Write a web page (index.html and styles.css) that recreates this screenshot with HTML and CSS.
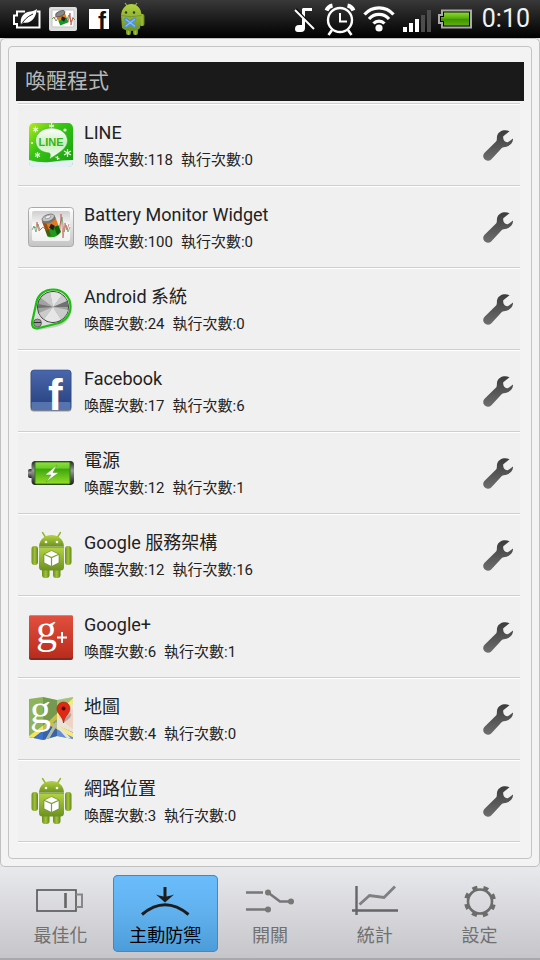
FILE: index.html
```html
<!DOCTYPE html>
<html lang="zh-Hant">
<head>
    <meta charset="UTF-8">
    <meta name="viewport" content="width=device-width, initial-scale=1.0">
    <title>喚醒程式</title>
    <link rel="stylesheet" href="styles.css">
</head>
<body>
    <!-- Shared shapes -->
    <svg class="sprite" width="0" height="0" aria-hidden="true">
        <defs>
            <linearGradient id="wrenchFill" x1="0" y1="0" x2="0" y2="1">
                <stop offset="0" stop-color="#3c3c3c"/>
                <stop offset="1" stop-color="#6e6e6e"/>
            </linearGradient>
            <linearGradient id="droidFill" x1="0" y1="0" x2="0" y2="1">
                <stop offset="0" stop-color="#b3d340"/>
                <stop offset="1" stop-color="#6c9120"/>
            </linearGradient>
            <linearGradient id="limbFill" x1="0" y1="0" x2="1" y2="0">
                <stop offset="0" stop-color="#6c8f20"/>
                <stop offset="0.5" stop-color="#a0c23a"/>
                <stop offset="1" stop-color="#648619"/>
            </linearGradient>
            <linearGradient id="frameFill" x1="0" y1="0" x2="0" y2="1">
                <stop offset="0" stop-color="#ffffff"/>
                <stop offset="1" stop-color="#c4c4c4"/>
            </linearGradient>
            <linearGradient id="screenFill" x1="0" y1="0" x2="0" y2="1">
                <stop offset="0" stop-color="#cfcfcf"/>
                <stop offset="0.5" stop-color="#fafafa"/>
                <stop offset="1" stop-color="#f1f1f1"/>
            </linearGradient>
            <linearGradient id="lineFill" x1="0" y1="0" x2="1" y2="1">
                <stop offset="0" stop-color="#b4ea18"/>
                <stop offset="0.4" stop-color="#35c512"/>
                <stop offset="1" stop-color="#139c10"/>
            </linearGradient>
            <linearGradient id="bubbleFill" x1="0" y1="0" x2="0" y2="1">
                <stop offset="0" stop-color="#ffffff"/>
                <stop offset="0.5" stop-color="#c9f0bf"/>
                <stop offset="1" stop-color="#f2fcef"/>
            </linearGradient>
            <linearGradient id="fbFill" x1="0" y1="0" x2="0" y2="1">
                <stop offset="0" stop-color="#4a67ab"/>
                <stop offset="1" stop-color="#25407f"/>
            </linearGradient>
            <linearGradient id="plusFill" x1="0" y1="0" x2="0" y2="1">
                <stop offset="0" stop-color="#e2503e"/>
                <stop offset="1" stop-color="#b92c1d"/>
            </linearGradient>
            <linearGradient id="cellFill" x1="0" y1="0" x2="0" y2="1">
                <stop offset="0" stop-color="#8fe040"/>
                <stop offset="0.28" stop-color="#6ccb28"/>
                <stop offset="0.32" stop-color="#3ba70c"/>
                <stop offset="1" stop-color="#96dd28"/>
            </linearGradient>
            <linearGradient id="capFill" x1="0" y1="0" x2="0" y2="1">
                <stop offset="0" stop-color="#222222"/>
                <stop offset="0.4" stop-color="#999999"/>
                <stop offset="1" stop-color="#1b1b1b"/>
            </linearGradient>
            <linearGradient id="statusCell" x1="0" y1="0" x2="0" y2="1">
                <stop offset="0" stop-color="#8ada2c"/>
                <stop offset="0.45" stop-color="#58ad0c"/>
                <stop offset="0.5" stop-color="#3f9100"/>
                <stop offset="1" stop-color="#5eb010"/>
            </linearGradient>

            <symbol id="wrench" viewBox="0 0 32 32">
                <path fill="url(#wrenchFill)" d="M27.5 2.2C22.5 -0.2 16.5 2 15.2 6.5C14.6 8.8 15.3 10.5 14.3 12.3L2.6 23.7A4.7 4.7 0 0 0 9.2 30.4L19.6 19.2C21 17.8 22.5 18.3 24.5 17.7C28.500 16.5 31.3 13.5 31 9.5L25.8 13.3C22.8 13.2 20.6 10.5 21.3 7.2Z"/>
            </symbol>

            <symbol id="droid" viewBox="0 0 48 48">
                <path d="M15.5 1.5L19 7M33.5 1.5L30 7" stroke="#93b432" stroke-width="1.4" stroke-linecap="round"/>
                <path fill="url(#droidFill)" d="M12 15.5C12.5 8 18 4 24.5 4S36.5 8 37 15.5Z"/>
                <circle cx="19" cy="11" r="1.3" fill="#fff"/>
                <circle cx="30" cy="11" r="1.3" fill="#fff"/>
                <rect x="4.5" y="15" width="6.5" height="19" rx="3" fill="url(#limbFill)"/>
                <rect x="38" y="15" width="6.5" height="19" rx="3" fill="url(#limbFill)"/>
                <rect x="15" y="34" width="7.5" height="13" rx="3" fill="url(#limbFill)"/>
                <rect x="26" y="34" width="7.5" height="13" rx="3" fill="url(#limbFill)"/>
                <path fill="url(#droidFill)" d="M12 16.5H37V36Q37 39.5 33.5 39.5H15.5Q12 39.5 12 36Z"/>
                <path stroke="#5c7a1b" stroke-width=".8" d="M12 16.2H37"/>
                <path fill="#fff" stroke="#60801d" stroke-width=".6" d="M24.5 19.5L32 23.2V31.8L24.5 35.5L17 31.8V23.2Z"/>
                <path fill="none" stroke="#7d9c3c" stroke-width="1.2" d="M17 23.2L24.5 26.5L32 23.2M24.5 26.5V35.5"/>
            </symbol>

            <symbol id="monitor" viewBox="0 0 48 48">
                <rect x="1.5" y="4.5" width="45" height="39" rx="3" fill="url(#frameFill)" stroke="#aaa"/>
                <rect x="5" y="8" width="38" height="30" rx="2" fill="url(#screenFill)"/>
                <path fill="none" stroke="#4d9958" stroke-width=".7" d="M5 27L7 23L9 29L11 21L13 27L16 24L18 26M32 25L35 14L37 29L39 22L41 29L43 24"/>
                <path fill="none" stroke="#c65a50" stroke-width=".7" d="M6 24L9 25L10 19L12 28L15 25M33 28L34 11L36 35L38 20L40 27L42 21"/>
                <g transform="rotate(-20 24 24)">
                    <path fill="#e5791f" d="M17.5 16H31.5V25H17.5Z"/>
                    <path fill="#22991d" d="M17.5 25H31.5V32Q24.5 37 17.5 32Z"/>
                    <path fill="#6b3009" d="M17.5 16H21V32.5L17.5 31Z" opacity=".6"/>
                    <path fill="#10600d" d="M27 25H31.5V32L27 34Z"/>
                    <path fill="#222" d="M25 21L28 24L25 28L22 24Z"/>
                    <ellipse cx="24.5" cy="16" rx="7" ry="3.8" fill="#777"/>
                    <ellipse cx="24.5" cy="14.5" rx="6.5" ry="3.3" fill="#c5c5c5" stroke="#666" stroke-width=".7"/>
                    <ellipse cx="24.5" cy="13.5" rx="3" ry="1.5" fill="#eee" stroke="#777" stroke-width=".5"/>
                </g>
            </symbol>
        </defs>
    </svg>

    <header class="status-bar">
        <div class="status-group">
            <svg width="29" height="24" viewBox="0 0 29 24">
                <path fill="none" stroke="#fff" stroke-width="2" d="M13 4.5H5V8.5H2V17H5V20.5H27.5V4.5H25"/>
                <path fill="#fff" d="M9 18C7.5 10 12 5 18 4.5C20.5 4.3 23 3.5 25 2C24 10 20 17 11.5 15.5L9 18Z"/>
                <path fill="none" stroke="#222" d="M8.5 19C11 14 15 9.5 21 7"/>
            </svg>
            <svg width="28" height="28" viewBox="0 0 28 28">
                <rect y="2" width="28" height="24" rx="2" fill="#dedede"/>
                <rect x="3" y="5" width="22" height="17" rx="1" fill="#fff" stroke="#c4c4c4"/>
                <path fill="none" stroke="#408a47" stroke-width=".8" d="M3 14L5 12L7 16L9 13M18 14L20 10L22 17L24 13L26 15"/>
                <path fill="none" stroke="#c9534c" stroke-width=".8" d="M5 14L7 11L9 14M19 17L21 8L22 20L24 12"/>
                <g transform="rotate(-22 14 14)">
                    <path fill="#e97818" d="M9 8H18V14H9Z"/>
                    <path fill="#179526" d="M9 14H18V19H9Z"/>
                    <path fill="#222" d="M14 11L17 14L14 17L12 14Z"/>
                    <ellipse cx="13.5" cy="8" rx="5" ry="2.5" fill="#888" stroke="#444" stroke-width=".6"/>
                </g>
            </svg>
            <svg width="28" height="28" viewBox="0 0 28 28">
                <rect x="4" y="4" width="20" height="20" fill="#fff"/>
                <text x="13" y="24" class="fb-small">f</text>
            </svg>
            <svg width="24" height="34" viewBox="0 0 24 34">
                <path stroke="#9ab83e" stroke-width="1.2" d="M4 1L7 5M16 1L13 5"/>
                <rect x="18.5" y="12" width="5" height="12" rx="2" fill="url(#limbFill)"/>
                <rect x="5" y="24" width="5" height="9" rx="2" fill="url(#limbFill)"/>
                <rect x="12" y="24" width="5" height="9" rx="2" fill="url(#limbFill)"/>
                <path fill="url(#droidFill)" d="M0 13C1 6 5 2 10.5 2S20 6 20.5 13L19 26Q17 29 10.5 29T1 26Z"/>
                <path stroke="#6f8f28" stroke-width=".8" d="M0 13.5Q10 16 20.5 13.5" fill="none"/>
                <circle cx="5" cy="10.500" r="1.2" fill="#333"/>
                <circle cx="13" cy="10.500" r="1.2" fill="#333"/>
                <path stroke="#4b8fe0" stroke-width="4" stroke-linecap="round" d="M5 17.5L13.5 24M13.5 17.5L5 24"/>
                <path stroke="#8bbcf3" stroke-width="1.4" stroke-linecap="round" d="M5 17.5L13.500 24M13.5 17.5L5 24"/>
            </svg>
        </div>
        <div class="status-group status-right">
            <svg width="26" height="32" viewBox="0 0 26 32">
                <path fill="#fff" d="M11 5H20V8H13V25Q13 29 9 29H6Q3 29 3 26Q3 22 7 22H10V6Z"/>
                <path stroke="#0b0b0b" stroke-width="2" d="M4 6L23 26"/>
                <path stroke="#fff" stroke-width="2" d="M3 7L22 26"/>
            </svg>
            <svg width="32" height="34" viewBox="0 0 32 34">
                <circle cx="16" cy="18" r="12" fill="none" stroke="#fff" stroke-width="2.4"/>
                <path fill="none" stroke="#fff" stroke-width="2" d="M16 11V19.5H23"/>
                <path stroke="#fff" stroke-width="2.6" d="M8 28L4.5 33M24 28L27.5 33"/>
                <path fill="none" stroke="#fff" stroke-width="4" d="M2.5 8.5Q4 4.5 8.5 3.5M29.5 8.5Q28 4.5 23.5 3.5"/>
            </svg>
            <svg width="34" height="32" viewBox="0 0 34 32">
                <g fill="none" stroke="#fff" stroke-width="3.2">
                    <path d="M2.5 11.500A19 19 0 0 1 31.5 11.500"/>
                    <path d="M7 16A13 13 0 0 1 27 16"/>
                    <path d="M11.500 20.5A7.500 7.500 0 0 1 22.5 20.5"/>
                </g>
                <circle cx="17" cy="25" r="3.6" fill="#fff"/>
            </svg>
            <svg width="30" height="32" viewBox="0 0 30 32">
                <path fill="#fff" d="M1 24H5V29H1ZM7 20H11V29H7ZM13 16H17V29H13Z"/>
                <path fill="#4c4c4c" d="M19 12H23V29H19ZM25 7H29V29H25Z"/>
            </svg>
            <svg width="38" height="32" viewBox="0 0 38 32">
                <path fill="#050505" stroke="#aaa" stroke-width="2" d="M4 7.5H33V24.5H4V20H1V12H4Z"/>
                <path fill="url(#statusCell)" d="M6 9.5H31V22.5H6V18H3V14H6Z"/>
            </svg>
            <time class="clock">0:10</time>
        </div>
    </header>

    <main class="panel">
        <section class="card">
            <h1>喚醒程式</h1>
            <ul class="app-list">
                <li>
                    <svg class="app-icon" viewBox="0 0 48 48">
                        <rect x="2" y="2" width="44" height="44" rx="5" fill="url(#lineFill)"/>
                        <path fill="#e3f0f6" d="M2 39Q12 42 23 41Q36 39 46 39V41Q46 46 41 46H7Q2 46 2 41Z"/>
                        <path stroke="#e5f8d9" stroke-width="1.2" d="M8.5 5.5V11.5M6 7L11 10M11 7L6 10M24.5 2V8M22 4L27 6M27 4L22 6M10.5 31V37M8 32.5L13 35.5M13 32.5L8 35.5M40.5 28V36M37 30L44 34M44 30L37 34M30.5 35V39M28.5 36L32.5 38"/>
                        <path fill="url(#bubbleFill)" stroke="#39a923" stroke-width=".6" d="M24.5 7C33.5 7 40.5 12.5 40.5 19.5C40.5 27 33 31.5 22.5 38C23.5 35 23.5 33 22.5 32C14 31.5 8.5 26.5 8.5 19.5C8.5 12.5 15.5 7 24.5 7Z"/>
                        <text x="24" y="25" class="line-logo">LINE</text>
                        <g fill="#efffde"><circle cx="38" cy="9" r="1.6"/><circle cx="5" cy="22" r="1"/></g>
                    </svg>
                    <div class="app-text">
                        <h2>LINE</h2>
                        <p><span>喚醒次數:118</span><span>執行次數:0</span></p>
                    </div>
                    <button type="button" class="tool" aria-label="LINE 設定"><svg><use href="#wrench"/></svg></button>
                </li>
                <li>
                    <svg class="app-icon"><use href="#monitor"/></svg>
                    <div class="app-text">
                        <h2>Battery Monitor Widget</h2>
                        <p><span>喚醒次數:100</span><span>執行次數:0</span></p>
                    </div>
                    <button type="button" class="tool" aria-label="Battery Monitor Widget 設定"><svg><use href="#wrench"/></svg></button>
                </li>
                <li>
                    <svg class="app-icon" viewBox="0 0 48 48">
                        <path fill="#777" opacity=".3" d="M10 20C13 9 20 6 27 6C38 6 45 14 44.5 24C44 34 38 40 29 42L12 45Q5 45 5 39Z"/>
                        <path fill="#dcdcdc" stroke="#19c00c" stroke-width="2.2" d="M9.5 17C11.5 9 18 4.5 26 4.5C36.5 4.5 43.5 12 43.5 21.5C43.5 30 38 36.5 30 38.5L10 43.5Q4.5 43 5 37.5Z"/>
                        <circle cx="26" cy="22" r="15.6" fill="#a2a2a2" stroke="#4a4a4a"/>
                        <g transform="translate(26 22)">
                            <path fill="#e6e6e6" d="M0 0L-3 -14.5A15 15 0 0 1 9 -12ZM0 0L-9 12A15 15 0 0 0 8 12.5Z"/>
                            <path fill="#cbcbcb" d="M0 0L9 -12A15 15 0 0 1 14 -6ZM0 0L-14 6A15 15 0 0 0 -9 12ZM0 0L-12 -9A15 15 0 0 1 -3 -14.5ZM0 0L15 3A15 15 0 0 1 8 12.5Z"/>
                            <path fill="#707070" d="M0 0L14 -6A15 15 0 0 1 15 0ZM0 0L-15 1A15 15 0 0 1 -14.7 -3Z"/>
                        </g>
                        <circle cx="10.5" cy="38" r="4" fill="#999" stroke="#555" stroke-width=".8"/>
                        <path stroke="#333" d="M7 37.5H14"/>
                    </svg>
                    <div class="app-text">
                        <h2>Android 系統</h2>
                        <p><span>喚醒次數:24</span><span>執行次數:0</span></p>
                    </div>
                    <button type="button" class="tool" aria-label="Android 系統 設定"><svg><use href="#wrench"/></svg></button>
                </li>
                <li>
                    <svg class="app-icon" viewBox="0 0 48 48">
                        <rect x="3.5" y="3.5" width="41" height="41" rx="3" fill="#999"/>
                        <rect x="4" y="3" width="40" height="40" rx="3" fill="url(#fbFill)" stroke="#2d4783" stroke-width=".6"/>
                        <rect x="4.5" y="35" width="39" height="8" rx="1" fill="#5673ad"/>
                        <text x="21" y="43" class="fb-large">f</text>
                    </svg>
                    <div class="app-text">
                        <h2>Facebook</h2>
                        <p><span>喚醒次數:17</span><span>執行次數:6</span></p>
                    </div>
                    <button type="button" class="tool" aria-label="Facebook 設定"><svg><use href="#wrench"/></svg></button>
                </li>
                <li>
                    <svg class="app-icon" viewBox="0 0 48 48">
                        <rect x="1" y="20" width="6" height="9" rx="2" fill="url(#capFill)"/>
                        <rect x="4.5" y="12" width="42.5" height="24" rx="4" fill="url(#capFill)"/>
                        <rect x="8" y="13" width="35" height="22" rx="1" fill="url(#cellFill)" stroke="#347d13"/>
                        <path fill="#fff" stroke="#5a9c27" stroke-width=".6" d="M30 16L18 26H24L19 33L32 23.5H26Z"/>
                    </svg>
                    <div class="app-text">
                        <h2>電源</h2>
                        <p><span>喚醒次數:12</span><span>執行次數:1</span></p>
                    </div>
                    <button type="button" class="tool" aria-label="電源 設定"><svg><use href="#wrench"/></svg></button>
                </li>
                <li>
                    <svg class="app-icon"><use href="#droid"/></svg>
                    <div class="app-text">
                        <h2>Google 服務架構</h2>
                        <p><span>喚醒次數:12</span><span>執行次數:16</span></p>
                    </div>
                    <button type="button" class="tool" aria-label="Google 服務架構 設定"><svg><use href="#wrench"/></svg></button>
                </li>
                <li>
                    <svg class="app-icon" viewBox="0 0 48 48">
                        <rect x="2" y="3" width="44" height="44" rx="2" fill="#7d2a20"/>
                        <rect x="2" y="2" width="44" height="43" rx="2" fill="url(#plusFill)"/>
                        <path stroke="#f07b65" d="M3 2.5H45"/>
                        <text x="9" y="30" class="logo-g">g</text>
                        <path stroke="#fff" stroke-width="2" d="M30 24.5H40M35 19V30"/>
                    </svg>
                    <div class="app-text">
                        <h2>Google+</h2>
                        <p><span>喚醒次數:6</span><span>執行次數:1</span></p>
                    </div>
                    <button type="button" class="tool" aria-label="Google+ 設定"><svg><use href="#wrench"/></svg></button>
                </li>
                <li>
                    <svg class="app-icon" viewBox="0 0 48 48">
                        <clipPath id="mapClip"><path d="M2 4L16 2L30 5L46 2V44L30 41L16 45L2 42Z"/></clipPath>
                        <g clip-path="url(#mapClip)">
                            <path fill="#8db45c" d="M0 0H48V48H0Z"/>
                            <path fill="#e6dccb" d="M29 20L48 5V40L30 30Z"/>
                            <path fill="#ecc9b8" d="M31 22L46 14V34Z"/>
                            <path fill="#3e70cc" d="M2 48V42L24 28L48 38V48Z"/>
                            <path fill="none" stroke="#f5e45d" stroke-width="4" d="M0 45L24 27L48 4M22 28L48 41"/>
                            <path fill="none" stroke="#dfe0cf" stroke-width="3" d="M18 48L29 29L46 48"/>
                            <path fill="#1d3d26" opacity=".22" d="M16 0L30 5V48L16 45Z"/>
                            <path fill="#fff" opacity=".2" d="M30 5L48 0V48L30 45Z"/>
                        </g>
                        <text x="3" y="28" class="logo-g">g</text>
                        <path fill="#444" opacity=".35" d="M36 28Q38 22 44 18Q46 22 36 28Z"/>
                        <path fill="#e02814" stroke="#a61a0d" stroke-width=".6" d="M36.5 28C35.5 21 30 19 30 13.5A6.5 6.5 0 0 1 43 13.5C43 19 37.5 21 36.5 28Z"/>
                        <circle cx="36.5" cy="13.5" r="2" fill="#3f0a05"/>
                    </svg>
                    <div class="app-text">
                        <h2>地圖</h2>
                        <p><span>喚醒次數:4</span><span>執行次數:0</span></p>
                    </div>
                    <button type="button" class="tool" aria-label="地圖 設定"><svg><use href="#wrench"/></svg></button>
                </li>
                <li>
                    <svg class="app-icon"><use href="#droid"/></svg>
                    <div class="app-text">
                        <h2>網路位置</h2>
                        <p><span>喚醒次數:3</span><span>執行次數:0</span></p>
                    </div>
                    <button type="button" class="tool" aria-label="網路位置 設定"><svg><use href="#wrench"/></svg></button>
                </li>
            </ul>
        </section>
    </main>

    <nav class="tab-bar">
        <button type="button" class="tab">
            <svg viewBox="0 0 52 36" fill="none" stroke="#555" stroke-width="1.6">
                <rect x="3" y="6" width="39" height="21"/>
                <path stroke="#666" stroke-width="2.6" d="M31.5 9V24"/>
                <path stroke="#888" stroke-width="2" d="M42 10.5H48V23H42"/>
            </svg>
            <span>最佳化</span>
        </button>
        <button type="button" class="tab active" aria-current="page">
            <svg viewBox="0 0 52 36" fill="none" stroke="#1c1c1c" stroke-width="3">
                <path d="M3 30.5Q26 11 49.500 30.5"/>
                <path d="M26 3V15"/>
                <path fill="#1c1c1c" stroke="none" d="M17 10.5Q23 12.5 26 12.5Q29 12.5 35 10.5L26 18.5Z"/>
            </svg>
            <span>主動防禦</span>
        </button>
        <button type="button" class="tab">
            <svg viewBox="0 0 52 36" fill="none" stroke="#777" stroke-width="2.6">
                <path d="M2 8.5H19M2 25.5H22M24 8.5L36 17.5H47"/>
                <g fill="#777" stroke="none"><circle cx="24" cy="8.5" r="3"/><circle cx="24" cy="25.5" r="3"/><circle cx="47" cy="17.5" r="3"/></g>
            </svg>
            <span>開關</span>
        </button>
        <button type="button" class="tab">
            <svg viewBox="0 0 52 36" fill="none" stroke="#666" stroke-width="2.4">
                <path d="M7.5 2V31M3 26.5H49"/>
                <path stroke="#808080" stroke-width="2.8" d="M10.5 20.5L20.5 11.5L35 13.5L46 2.5"/>
            </svg>
            <span>統計</span>
        </button>
        <button type="button" class="tab">
            <svg viewBox="0 0 52 36" fill="none" stroke="#6c6c6c">
                <circle cx="26" cy="17.5" r="14" stroke-width="4" stroke-dasharray="5 5.995" transform="rotate(12.3 26 17.5)"/>
                <circle cx="26" cy="17.5" r="12" stroke-width="2.6"/>
            </svg>
            <span>設定</span>
        </button>
    </nav>
</body>
</html>
```

FILE: styles.css
```css
* {
    box-sizing: border-box;
}

body {
    display: flex;
    flex-direction: column;
    min-height: 100vh;
    margin: 0;
    background: #e4e5e9;
    color: #222;
    font-family: Roboto, "Noto Sans CJK TC", sans-serif;
}

h1, h2, p, ul {
    margin: 0;
    padding: 0;
    font-weight: 400;
}

button {
    padding: 0;
    border: none;
    background: none;
    font-family: inherit;
    cursor: pointer;
}

svg {
    display: block;
    flex: none;
    overflow: visible;
}

.sprite {
    position: absolute;
}

/* Status bar */
.status-bar {
    display: flex;
    justify-content: space-between;
    align-items: center;
    height: 38px;
    padding: 0 10px 0 12px;
    background: linear-gradient(#383838, #000);
}

.status-group {
    display: flex;
    align-items: center;
    gap: 8px;
}

.status-right {
    gap: 6px;
}

.clock {
    color: #f2f2f2;
    font-size: 25px;
    line-height: 38px;
}

/* Panel */
.panel {
    display: flex;
    flex: 1;
    padding: 7px;
    border: 1px solid #c0c0c0;
    border-radius: 5px;
    background: #f3f3f3;
}

.card {
    flex: 1;
    padding: 15px 7px;
    border: 1px solid #c4c4c4;
    border-radius: 4px;
}

.card h1 {
    padding: 0 9px;
    background: #1a1a1a;
    color: #b8b8b8;
    font-size: 21px;
    line-height: 39px;
}

.app-list {
    margin: 2px 4px 0 2px;
    border-top: 1px solid #cfcfcf;
    background: #f0f0f0;
    list-style: none;
}

.app-list li {
    display: flex;
    align-items: center;
    padding: 14px 6px 13px 9px;
    border-bottom: 1px solid #cfcfcf;
    box-shadow: inset 0 1px #fff;
}

.app-list li:last-child {
    box-shadow: inset 0 1px #fff, 0 1px #fff;
}

.app-icon {
    width: 48px;
    height: 48px;
}

.app-text {
    flex: 1;
    padding-left: 9px;
}

.app-text h2 {
    font-size: 18px;
    line-height: 30px;
}

.app-text p {
    display: flex;
    gap: 8px;
    font-size: 15px;
    line-height: 24px;
}

.tool svg {
    width: 32px;
    height: 32px;
}

/* Logo lettering */
.line-logo {
    fill: #35b518;
    font: bold 11px "Liberation Sans", sans-serif;
    text-anchor: middle;
}

.fb-small {
    fill: #111;
    font: bold 24px "Liberation Sans", sans-serif;
}

.fb-large {
    fill: #fff;
    font: bold 44px "Liberation Sans", sans-serif;
}

.logo-g {
    fill: #fff;
    font: 42px "Liberation Serif", serif;
}

/* Bottom tabs */
.tab-bar {
    display: flex;
    padding: 8px 8px 6px;
    border-bottom: 2px solid #a9a9ad;
    background: linear-gradient(#e8e9ed, #c5c5ca);
}

.tab {
    display: flex;
    flex: 1;
    flex-direction: column;
    align-items: center;
    gap: 4px;
    padding: 9px 0 4px;
    border-radius: 5px;
    color: #707070;
    font-size: 18px;
    line-height: 24px;
}

.tab svg {
    width: 52px;
    height: 36px;
}

.tab.active {
    background: linear-gradient(#6abdfb, #60b0ee 50%, #4d9cda);
    box-shadow: inset 0 0 0 1px #4588be;
    color: #000;
}
```
